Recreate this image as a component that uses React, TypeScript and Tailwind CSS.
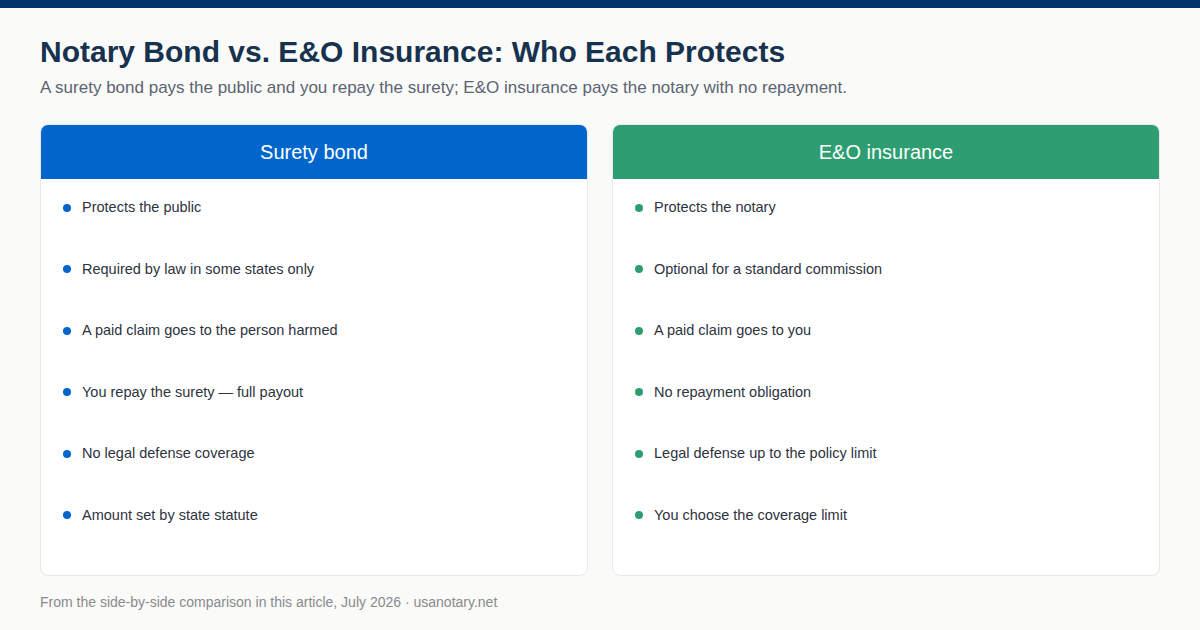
import React from 'react';

interface Column {
  title: string;
  header: string;
  dot: string;
  items: string[];
}

const columns: Column[] = [
  {
    title: 'Surety bond',
    header: 'bg-[#0066cc]',
    dot: 'bg-[#0066cc]',
    items: [
      'Protects the public',
      'Required by law in some states only',
      'A paid claim goes to the person harmed',
      'You repay the surety — full payout',
      'No legal defense coverage',
      'Amount set by state statute',
    ],
  },
  {
    title: 'E&O insurance',
    header: 'bg-[#2e9e72]',
    dot: 'bg-[#2e9e72]',
    items: [
      'Protects the notary',
      'Optional for a standard commission',
      'A paid claim goes to you',
      'No repayment obligation',
      'Legal defense up to the policy limit',
      'You choose the coverage limit',
    ],
  },
];

export default function App() {
  return (
    <div className="w-[1200px] h-[630px] bg-[#fafaf8] flex flex-col font-['Liberation_Sans',Arial,sans-serif] overflow-hidden">
      <div className="h-[8px] bg-[#003366] shrink-0" />
      <div className="px-[40px] pt-[26px] flex flex-col">
        <h1 className="text-[30px] leading-[36px] font-bold text-[#17324f]">
          Notary Bond vs. E&amp;O Insurance: Who Each Protects
        </h1>
        <p className="mt-[7px] text-[17px] leading-[22px] text-[#5a6472]">
          A surety bond pays the public and you repay the surety; E&amp;O insurance pays the notary with no repayment.
        </p>

        <div className="mt-[25px] grid grid-cols-2 gap-[24px]">
          {columns.map((col) => (
            <div
              key={col.title}
              className="h-[452px] bg-white border border-[#e8e8ee] rounded-[8px] overflow-hidden flex flex-col"
            >
              <div className={`${col.header} h-[54px] flex items-center justify-center`}>
                <span className="text-white text-[20px]">{col.title}</span>
              </div>
              <ul className="pt-[18px] pl-[22px] flex flex-col gap-[40.6px]">
                {col.items.map((item) => (
                  <li key={item} className="flex items-center text-[14.5px] leading-[21px] text-[#2d3340]">
                    <span className={`${col.dot} w-[8px] h-[8px] rounded-full mr-[11px] shrink-0`} />
                    {item}
                  </li>
                ))}
              </ul>
            </div>
          ))}
        </div>

        <p className="mt-[17px] text-[14px] leading-[18px] text-[#888a8e]">
          From the side-by-side comparison in this article, July 2026 · usanotary.net
        </p>
      </div>
    </div>
  );
}
